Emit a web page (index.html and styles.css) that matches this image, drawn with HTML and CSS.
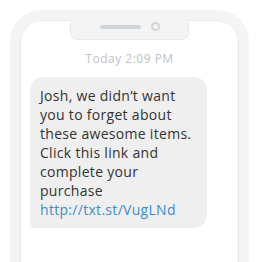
FILE: index.html
```html
<!DOCTYPE html>
<html lang="en">
<head>
    <meta charset="UTF-8">
    <meta name="viewport" content="width=device-width, initial-scale=1.0">
    <title>Message preview</title>
    <link rel="stylesheet" href="styles.css">
</head>
<body>
    <div class="phone">
        <div class="notch">
            <span class="speaker"></span>
            <span class="camera"></span>
        </div>
        <div class="timestamp">Today 2:09 PM</div>
        <div class="bubble">
            Josh, we didn’t want<br>
            you to forget about<br>
            these awesome items.<br>
            Click this link and<br>
            complete your<br>
            purchase<br>
            <a href="#" class="link">http://txt.st/VugLNd</a>
        </div>
    </div>
</body>
</html>
```

FILE: styles.css
```css
body {
    margin: 0;
    background: #fff;
    font-family: "Open Sans", "Liberation Sans", sans-serif;
}
.phone {
    margin: 10px 0 0 10px;
    width: 219px;
    height: 320px;
    border: 10px solid #f4f4f4;
    border-radius: 32px;
    box-shadow: inset 0 0 0 1px #e8e8e8;
    background: #fff;
}
.notch {
    width: 119px;
    height: 20px;
    margin: 0 auto;
    box-sizing: border-box;
    padding-bottom: 6px;
    background: #f4f4f4;
    border: 1px solid #e8e8e8;
    border-top: none;
    border-radius: 0 0 8px 8px;
    display: flex;
    align-items: center;
    justify-content: center;
    gap: 10px;
}
.speaker {
    width: 41px;
    height: 4px;
    border-radius: 2px;
    background: #cfd5d9;
}
.camera {
    width: 5px;
    height: 5px;
    border: 2px solid #cfd5d9;
    border-radius: 50%;
    background: #f4f6f7;
}
.timestamp {
    margin-top: 11px;
    text-align: center;
    font-size: 12px;
    letter-spacing: 0.5px;
    color: #c2c2c2;
    line-height: 16px;
}
.bubble {
    margin: 10px 0 0 10px;
    width: 157px;
    padding: 9px 10px;
    background: #efefef;
    border-radius: 13px 13px 13px 3px;
    font-size: 14px;
    letter-spacing: 0.3px;
    line-height: 19px;
    color: #333;
    white-space: nowrap;
}
.link {
    color: #3b8ed0;
    text-decoration: none;
}
```
